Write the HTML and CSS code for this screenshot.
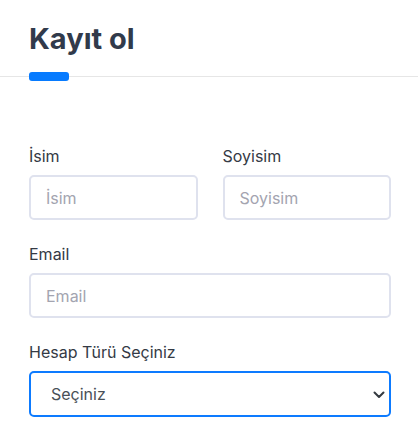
FILE: index.html
```html
<!DOCTYPE html>
<html lang="tr">
<head>
<meta charset="utf-8">
<title>Kayıt ol</title>
<link rel="stylesheet" href="styles.css">
</head>
<body>
<div class="page">
  <header class="head">
    <h1 class="title">Kayıt ol</h1>
    <div class="accent"></div>
  </header>
  <form class="form">
    <div class="row">
      <div class="field">
        <label class="label" for="isim">İsim</label>
        <input class="input" id="isim" type="text" placeholder="İsim">
      </div>
      <div class="field">
        <label class="label" for="soyisim">Soyisim</label>
        <input class="input" id="soyisim" type="text" placeholder="Soyisim">
      </div>
    </div>
    <div class="field">
      <label class="label" for="email">Email</label>
      <input class="input" id="email" type="email" placeholder="Email">
    </div>
    <div class="field">
      <label class="label" for="tur">Hesap Türü Seçiniz</label>
      <div class="select-wrap">
        <select class="select" id="tur">
          <option>Seçiniz</option>
        </select>
        <svg class="chev" width="12" height="8" viewBox="0 0 12 8"><path d="M1.5 1.5 6 6l4.5-4.5" fill="none" stroke="#343a40" stroke-width="2" stroke-linecap="round" stroke-linejoin="round"/></svg>
      </div>
    </div>
  </form>
</div>
</body>
</html>
```
FILE: styles.css
```css
* { box-sizing: border-box; }
html, body { margin: 0; background: #fff; }
body { font-family: Inter, "Noto Sans", sans-serif; color: #343a45; }
.page { width: 418px; }
.head {
  border-bottom: 1px solid #e6e6e6;
  padding: 21px 27px 0 29px;
}
.title {
  margin: 0;
  font-size: 29px;
  line-height: 35px;
  font-weight: 700;
  color: #313a4b;
}
.accent {
  width: 40px;
  height: 9px;
  margin-top: 16px;
  margin-bottom: -5px;
  background: #077bff;
  border-radius: 3px;
  position: relative;
}
.form {
  padding: 67px 27px 0 29px;
  display: flex;
  flex-direction: column;
  gap: 22px;
}
.row {
  display: grid;
  grid-template-columns: 1fr 1fr;
  gap: 25px;
}
.field { display: flex; flex-direction: column; }
.label {
  font-size: 16px;
  line-height: 24px;
  margin-bottom: 7px;
  color: #343a45;
}
.input, .select {
  font-family: Inter, "Noto Sans", sans-serif;
  font-size: 16px;
  height: 45px;
  width: 100%;
  border: 2px solid #dfe2ee;
  border-radius: 5px;
  padding: 0 15px;
  color: #495057;
  background: #fff;
  outline: none;
}
.input::placeholder { color: #a3a4b0; }
.select-wrap { position: relative; }
.select {
  appearance: none;
  -webkit-appearance: none;
  height: 46px;
  border-color: #0d7bff;
  padding-left: 20px;
  color: #495057;
}
.chev {
  position: absolute;
  right: 6px;
  top: 20px;
}
```
